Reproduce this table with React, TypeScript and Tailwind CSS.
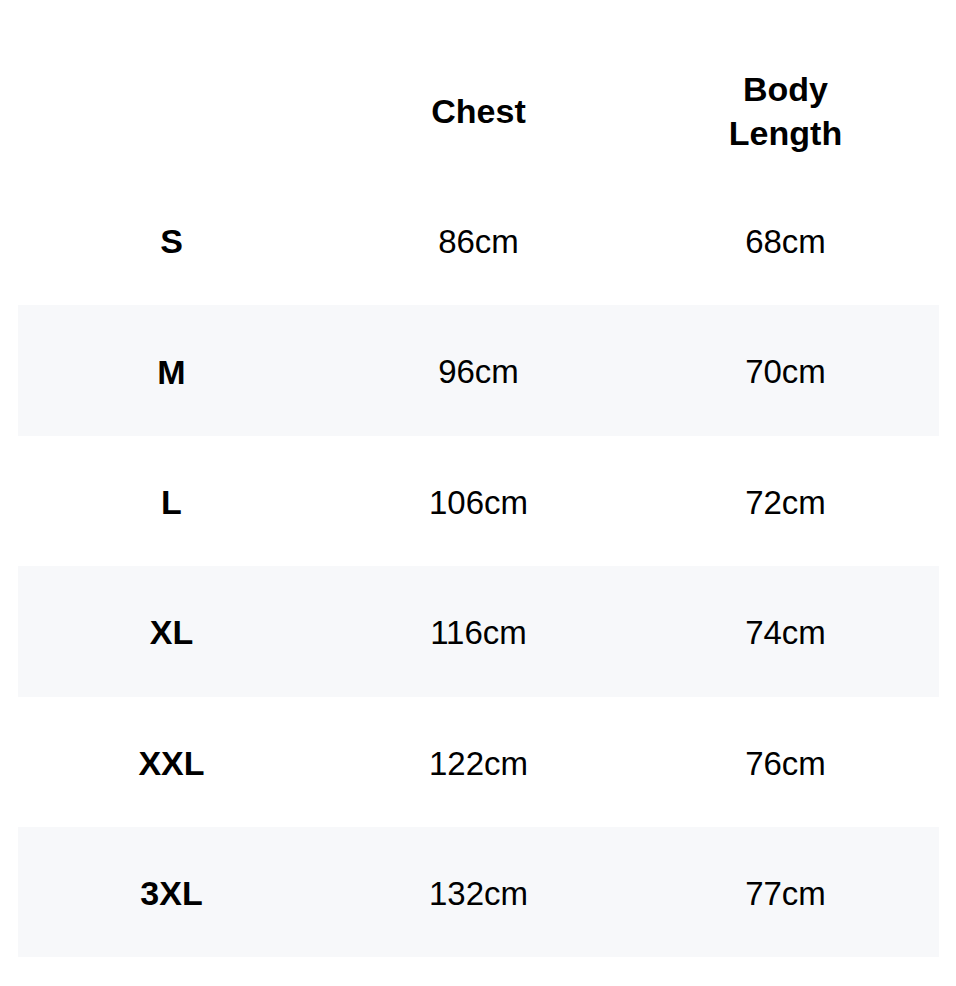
import React from "react";

const rows = [
  ["S", "86cm", "68cm"],
  ["M", "96cm", "70cm"],
  ["L", "106cm", "72cm"],
  ["XL", "116cm", "74cm"],
  ["XXL", "122cm", "76cm"],
  ["3XL", "132cm", "77cm"],
];

export default function App() {
  return (
    <div
      className="w-[956px] h-[986px] bg-white pt-[45px] pl-[18px] pr-[17px] text-black"
      style={{ fontFamily: '"Liberation Sans", Arial, Helvetica, sans-serif' }}
    >
      <div className="grid grid-cols-3 h-[130px] pt-[2px] items-center text-center font-bold text-[34px] leading-[44px]">
        <div></div>
        <div>Chest</div>
        <div>
          Body
          <br />
          Length
        </div>
      </div>
      {rows.map((r, i) => (
        <div
          key={r[0]}
          className={`grid grid-cols-3 h-[130.4px] pt-[3px] items-center text-center text-[33px] ${
            i % 2 === 1 ? "bg-[#f7f8fa]" : "bg-white"
          }`}
        >
          <div className="font-bold text-[34px]">{r[0]}</div>
          <div>{r[1]}</div>
          <div>{r[2]}</div>
        </div>
      ))}
    </div>
  );
}
